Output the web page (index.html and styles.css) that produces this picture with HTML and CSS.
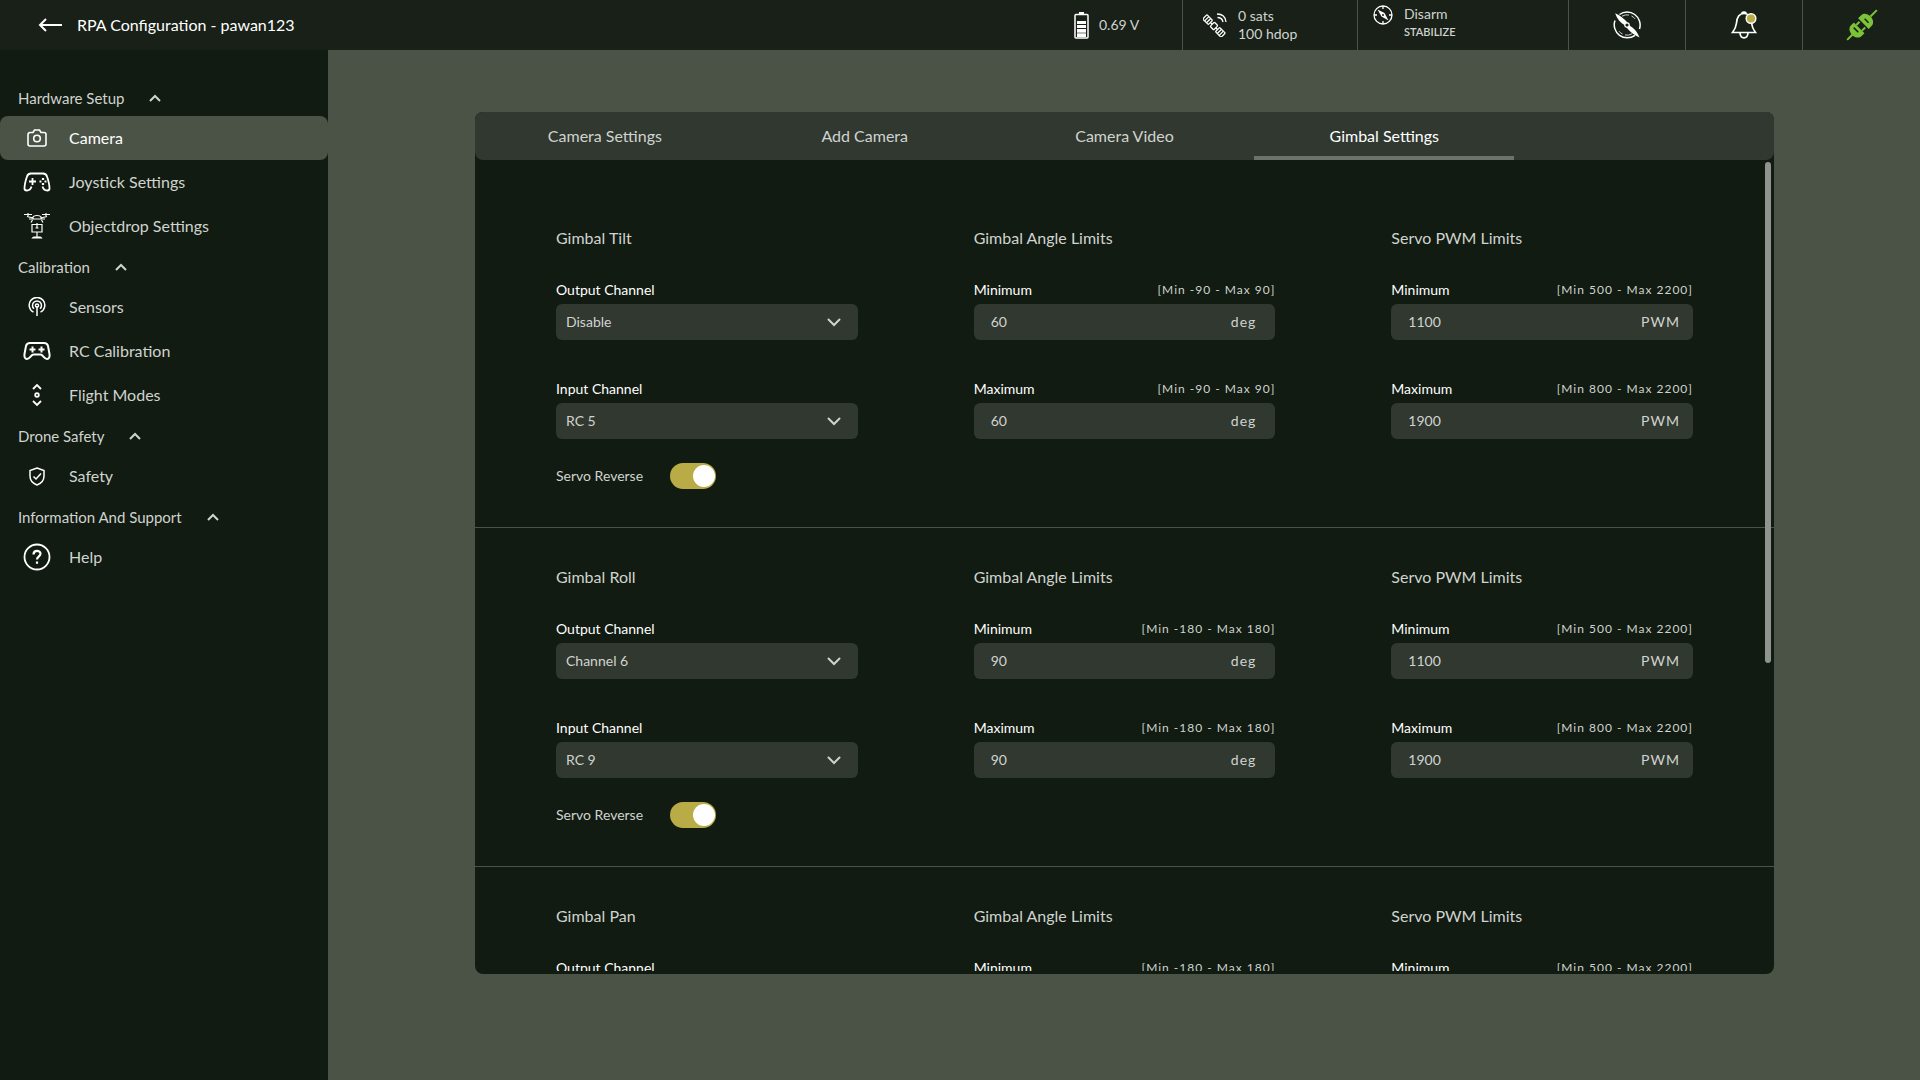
FILE: index.html
```html
<!DOCTYPE html>
<html lang="en">
  <head>
    <meta charset="UTF-8" />
    <meta name="viewport" content="width=device-width, initial-scale=1.0" />
    <title>RPA Configuration</title>
    <link rel="stylesheet" href="styles.css">
  </head>
  <body>
    <svg class="sprite" aria-hidden="true">
      <symbol id="up" viewBox="0 0 12 8"><path d="M1 7l5-5 5 5" fill="none" stroke="currentColor" stroke-width="2" /></symbol>
      <symbol id="down" viewBox="0 0 14 9"><path d="M1.500 1.500L7 7l5.500-5.500" fill="none" stroke="currentColor" stroke-width="2" stroke-linecap="round" /></symbol>
    </svg>

    <header class="topbar">
      <a class="back" href="#" aria-label="Back">
        <svg width="24" height="14" viewBox="0 0 24 14" fill="none" stroke="currentColor" stroke-width="2"><path d="M24 7H2M8 1L2 7l6 6" /></svg>
      </a>
      <h1 class="title">RPA Configuration - pawan123</h1>
      <div class="status battery">
        <svg width="15" height="27" viewBox="0 0 15 27">
          <path d="M5 0h5v2H5z" fill="#fff" />
          <rect x="1" y="2.500" width="13" height="23.500" rx="1" fill="none" stroke="#fff" stroke-width="1.500" />
          <path d="M3 9h9v3H3zM3 13h9v3H3zM3 17h9v3H3zM3 22h9v3H3z" fill="#fff" />
          <path d="M3 20h9v2H3z" fill="#bbb" />
        </svg>
        <span>0.69 V</span>
      </div>
      <div class="status gps">
        <svg width="24" height="24" viewBox="0 0 24 24" fill="none" stroke="#fff" stroke-width="1.300">
          <g transform="rotate(45 11 13)">
            <rect x="-2" y="10" width="8" height="6" rx="1" />
            <path d="M.7 10v6M3.300 10v6M6 13h2.500" />
            <rect x="8.500" y="10" width="5" height="6" rx="1" />
            <path d="M13.500 13h2.500" />
            <rect x="16" y="10" width="8" height="6" rx="1" />
            <path d="M18.700 10v6M21.300 10v6" />
          </g>
          <path d="M14 1c5 0 8.500 3 9 8M14.500 4.500c3 0 5 2 5.500 4.500" />
        </svg>
        <div class="lines"><span>0 sats</span><span>100 hdop</span></div>
      </div>
      <div class="status mode">
        <svg width="20" height="20" viewBox="0 0 20 20" fill="none" stroke="#fff" stroke-width="1.300">
          <circle cx="10" cy="10" r="9" />
          <path d="M10 1v3M10 16v3M1 10h3M16 10h3" />
          <path d="M4.500 4.500l7 3.500 4 7.500-7-4z" fill="#fff" stroke="none" />
          <circle cx="10" cy="10" r="1" fill="#182018" stroke="none" />
        </svg>
        <div class="lines"><span>Disarm</span><strong>STABILIZE</strong></div>
      </div>
      <button class="action" aria-label="Motors">
        <svg width="28" height="28" viewBox="0 0 28 28" fill="none" stroke="#fff">
          <path d="M6.500 3.500A13 13 0 0 1 26.500 18M22 24.300A13 13 0 0 1 2 9.500" stroke-width="1.500" />
          <path d="M9 5.200a10 10 0 0 1 7-1.200M18.500 5a10 10 0 0 1 3.500 2.800M19 22.800a10 10 0 0 1-7 1.200M9.500 23a10 10 0 0 1-3.500-2.800" stroke-width="0.800" />
          <path d="M2.200 2.200C7 4.500 11 7.500 14.500 11.500l2 3C20.500 17 24 20 26.500 26.500 21 24 17 21 13.500 16.500l-2-2.500C7.500 11.500 4 8 2.200 2.200z" fill="#fff" stroke="none" />
          <circle cx="14" cy="14" r="2.200" fill="#182018" stroke-width="1.200" />
        </svg>
      </button>
      <button class="action" aria-label="Notifications">
        <svg width="26" height="28" viewBox="0 0 26 28">
          <path d="M1.500 21.500h23c-2.500-3-3.500-5.500-4-9.500-.5-6.500-3-9.500-7.500-9.500S6 5.500 5.500 12c-.5 4-1.500 6.500-4 9.500zM9 22c.5 6.500 7.500 6.500 8 0M11 2.500c0-2 4-2 4 0" fill="none" stroke="#fff" stroke-width="1.700" />
          <circle cx="20" cy="7.500" r="4.800" fill="#b9ab45" stroke="#fff" stroke-width="1.500" />
        </svg>
      </button>
      <button class="action" aria-label="Connection">
        <svg width="32" height="32" viewBox="0 0 32 32">
          <g transform="rotate(-45 16 16)" fill="#7cc33a">
            <rect x="-5" y="15" width="8" height="2" />
            <path d="M2 16c0-5 3-7.500 6-7.500h4v15H8c-3 0-6-2.500-6-7.500z" />
            <path d="M12 11h4.500v2H12zM12 19h4.500v2H12z" />
            <path d="M18 8.500h4c3 0 6 2.500 6 7.500s-3 7.500-6 7.500h-4z" />
            <rect x="28" y="15" width="9" height="2" />
            <path d="M7.500 12H9v6.500H7.500zM21.500 13.500H23V19h-1.500z" fill="#182018" />
          </g>
        </svg>
      </button>
    </header>

    <div class="layout">
      <nav class="sidebar">
        <button class="group">Hardware Setup <svg class="up"><use href="#up" /></svg></button>
        <a class="item active" href="#">
          <svg width="20" height="18" viewBox="0 0 20 18" fill="none" stroke="currentColor" stroke-width="1.600"><path d="M3 3.500h3L7.500 1h5L14 3.500h3a2 2 0 0 1 2 2V15a2 2 0 0 1-2 2H3a2 2 0 0 1-2-2V5.500a2 2 0 0 1 2-2z" /><circle cx="10" cy="9.500" r="3.300" /></svg>
          <span>Camera</span>
        </a>
        <a class="item" href="#">
          <svg width="28" height="20" viewBox="0 0 28 20" fill="none" stroke="currentColor" stroke-width="1.800"><path d="M8 1.500c-2.500 0-3.500 1-4.200 3.500C2.500 9 1.500 13.500 1.500 16.500c0 1.700 1 2 2.300 2 2 0 3.700-.5 4.700-4M20 1.500c2.500 0 3.500 1 4.200 3.500 1.300 4 2.300 8.500 2.300 11.500 0 1.700-1 2-2.300 2-2 0-3.700-.5-4.700-4M7 1.500h14" /><path d="M9.500 6v7M6 9.500h7" /><path d="M20 6v2M20 11v2M16.500 9.500h2M21.500 9.500h2" stroke-width="2.200" /></svg>
          <span>Joystick Settings</span>
        </a>
        <a class="item" href="#">
          <svg width="26" height="26" viewBox="0 0 26 26" fill="none" stroke="currentColor" stroke-width="1.200"><path d="M0 1.500h8M18 1.500h8M4 0v3M22 0v3M3 3.500l6 1.500M23 3.500L17 5M9 4c1-2 7-2 8 0v2H9zM9 6H5M17 6h4M8.500 7L7 9.500M17.500 7L19 9.500M13 10v5M8 11.500h10V19H8zM11.500 15h3M13 19v5M8.500 25c1-1.500 8-1.500 9 0z" /></svg>
          <span>Objectdrop Settings</span>
        </a>

        <button class="group">Calibration <svg class="up"><use href="#up" /></svg></button>
        <a class="item" href="#">
          <svg width="18" height="20" viewBox="0 0 18 20" fill="none" stroke="currentColor" stroke-width="1.500"><path d="M5.500 15.200a7.800 7.800 0 1 1 7 0M6 11.800a4.500 4.500 0 1 1 6 0M9 9v10" /><circle cx="9" cy="8.500" r="1.600" /></svg>
          <span>Sensors</span>
        </a>
        <a class="item" href="#">
          <svg width="28" height="20" viewBox="0 0 28 20" fill="none" stroke="currentColor" stroke-width="2"><path d="M7 2h14c2.500 0 3.500 1 4 3l1.500 8c.5 3-.5 5-2.500 5-3 0-4-4.500-6.500-4.500h-7C8 13.500 7 18 4 18c-2 0-3-2-2.500-5L3 5c.5-2 1.500-3 4-3zM9.500 5.500v6M6.500 8.500h6M18.500 5.500v6M15.500 8.500h6" /></svg>
          <span>RC Calibration</span>
        </a>
        <a class="item" href="#">
          <svg width="12" height="24" viewBox="0 0 12 24" fill="none" stroke="currentColor" stroke-width="1.800"><path d="M2 6l4-4 4 4M2 18l4 4 4-4" /><circle cx="6" cy="12" r="1.800" /></svg>
          <span>Flight Modes</span>
        </a>

        <button class="group">Drone Safety <svg class="up"><use href="#up" /></svg></button>
        <a class="item" href="#">
          <svg width="16" height="19" viewBox="0 0 16 19" fill="none" stroke="currentColor" stroke-width="1.500"><path d="M8 1l7 2.500V9c0 5-3 7.500-7 9-4-1.500-7-4-7-9V3.500zM4.500 9.500L7 12l5-5.500" /></svg>
          <span>Safety</span>
        </a>

        <button class="group">Information And Support <svg class="up"><use href="#up" /></svg></button>
        <a class="item" href="#">
          <svg width="28" height="28" viewBox="0 0 28 28" fill="none" stroke="currentColor" stroke-width="1.800"><circle cx="14" cy="14" r="12.500" /><path d="M10.500 11.500c0-5 7-4.500 7-.7 0 2.500-3.500 2.600-3.500 5.700M14 18.500v2.300" stroke-width="2.200" /></svg>
          <span>Help</span>
        </a>
      </nav>

      <main class="main">
        <div class="panel">
          <div class="tabs" role="tablist">
            <button class="tab" role="tab">Camera Settings</button>
            <button class="tab" role="tab">Add Camera</button>
            <button class="tab" role="tab">Camera Video</button>
            <button class="tab selected" role="tab" aria-selected="true">Gimbal Settings</button>
          </div>
          <div class="content">
            <section class="gimbal">
              <h2>Gimbal Tilt</h2>
              <h2>Gimbal Angle Limits</h2>
              <h2>Servo PWM Limits</h2>
              <div class="field">
                <label for="tilt-out">Output Channel</label>
                <div class="box"><select id="tilt-out"><option>Disable</option></select><svg class="down"><use href="#down" /></svg></div>
              </div>
              <div class="field">
                <div class="caption"><label for="tilt-amin">Minimum</label><span class="hint">[Min -90 - Max 90]</span></div>
                <div class="box"><input id="tilt-amin" type="text" value="60"><span class="unit deg">deg</span></div>
              </div>
              <div class="field">
                <div class="caption"><label for="tilt-pmin">Minimum</label><span class="hint">[Min 500 - Max 2200]</span></div>
                <div class="box"><input id="tilt-pmin" type="text" value="1100"><span class="unit">PWM</span></div>
              </div>
              <div class="field">
                <label for="tilt-in">Input Channel</label>
                <div class="box"><select id="tilt-in"><option>RC 5</option></select><svg class="down"><use href="#down" /></svg></div>
              </div>
              <div class="field">
                <div class="caption"><label for="tilt-amax">Maximum</label><span class="hint">[Min -90 - Max 90]</span></div>
                <div class="box"><input id="tilt-amax" type="text" value="60"><span class="unit deg">deg</span></div>
              </div>
              <div class="field">
                <div class="caption"><label for="tilt-pmax">Maximum</label><span class="hint">[Min 800 - Max 2200]</span></div>
                <div class="box"><input id="tilt-pmax" type="text" value="1900"><span class="unit">PWM</span></div>
              </div>
              <div class="reverse">
                <label for="tilt-rev">Servo Reverse</label>
                <input class="switch" id="tilt-rev" type="checkbox" checked>
              </div>
            </section>

            <section class="gimbal">
              <h2>Gimbal Roll</h2>
              <h2>Gimbal Angle Limits</h2>
              <h2>Servo PWM Limits</h2>
              <div class="field">
                <label for="roll-out">Output Channel</label>
                <div class="box"><select id="roll-out"><option>Channel 6</option></select><svg class="down"><use href="#down" /></svg></div>
              </div>
              <div class="field">
                <div class="caption"><label for="roll-amin">Minimum</label><span class="hint">[Min -180 - Max 180]</span></div>
                <div class="box"><input id="roll-amin" type="text" value="90"><span class="unit deg">deg</span></div>
              </div>
              <div class="field">
                <div class="caption"><label for="roll-pmin">Minimum</label><span class="hint">[Min 500 - Max 2200]</span></div>
                <div class="box"><input id="roll-pmin" type="text" value="1100"><span class="unit">PWM</span></div>
              </div>
              <div class="field">
                <label for="roll-in">Input Channel</label>
                <div class="box"><select id="roll-in"><option>RC 9</option></select><svg class="down"><use href="#down" /></svg></div>
              </div>
              <div class="field">
                <div class="caption"><label for="roll-amax">Maximum</label><span class="hint">[Min -180 - Max 180]</span></div>
                <div class="box"><input id="roll-amax" type="text" value="90"><span class="unit deg">deg</span></div>
              </div>
              <div class="field">
                <div class="caption"><label for="roll-pmax">Maximum</label><span class="hint">[Min 800 - Max 2200]</span></div>
                <div class="box"><input id="roll-pmax" type="text" value="1900"><span class="unit">PWM</span></div>
              </div>
              <div class="reverse">
                <label for="roll-rev">Servo Reverse</label>
                <input class="switch" id="roll-rev" type="checkbox" checked>
              </div>
            </section>

            <section class="gimbal">
              <h2>Gimbal Pan</h2>
              <h2>Gimbal Angle Limits</h2>
              <h2>Servo PWM Limits</h2>
              <div class="field">
                <label for="pan-out">Output Channel</label>
                <div class="box"><select id="pan-out"></select><svg class="down"><use href="#down" /></svg></div>
              </div>
              <div class="field">
                <div class="caption"><label for="pan-amin">Minimum</label><span class="hint">[Min -180 - Max 180]</span></div>
                <div class="box"><input id="pan-amin" type="text"></div>
              </div>
              <div class="field">
                <div class="caption"><label for="pan-pmin">Minimum</label><span class="hint">[Min 500 - Max 2200]</span></div>
                <div class="box"><input id="pan-pmin" type="text"></div>
              </div>
            </section>
          </div>
          <div class="scroll-thumb"></div>
        </div>
      </main>
    </div>
  </body>
</html>
```
FILE: styles.css
```css
* {
  box-sizing: border-box;
}
body {
  margin: 0;
  height: 100vh;
  display: flex;
  flex-direction: column;
  background: #4b5347;
  color: #d0d3cf;
  font-family: Lato, sans-serif;
  font-size: 16px;
  line-height: 20px;
}
button,
input,
select {
  margin: 0;
  padding: 0;
  border: 0;
  background: none;
  color: inherit;
  font: inherit;
}
a {
  color: inherit;
  text-decoration: none;
}
svg {
  display: block;
  flex: none;
}
.sprite {
  position: absolute;
  width: 0;
  height: 0;
}

/* top bar */
.topbar {
  display: flex;
  align-items: center;
  height: 50px;
  flex: none;
  background: #182018;
}
.back {
  margin-left: 38px;
  color: #fff;
}
.title {
  flex: 1;
  margin: 0 0 0 15px;
  color: #fff;
  font-size: 16px;
  font-weight: 400;
}
.status {
  display: flex;
  align-items: center;
  height: 100%;
  font-size: 14px;
  line-height: 18px;
}
.battery {
  width: 108px;
  gap: 10px;
}
.gps {
  width: 175px;
  padding-left: 20px;
  gap: 11px;
  border-left: 1px solid #4b5347;
}
.mode {
  width: 211px;
  padding: 5px 0 0 15px;
  gap: 11px;
  align-items: flex-start;
  border-left: 1px solid #4b5347;
}
.mode strong {
  font-size: 11px;
  font-weight: 600;
}
.lines {
  display: flex;
  flex-direction: column;
}
.action {
  display: flex;
  align-items: center;
  justify-content: center;
  width: 117px;
  height: 100%;
  border-left: 1px solid #4b5347;
}
.action:last-child {
  width: 118px;
}

/* sidebar */
.layout {
  display: flex;
  flex: 1;
  min-height: 0;
}
.sidebar {
  width: 328px;
  flex: none;
  padding-top: 29px;
  background: #111b11;
}
.group {
  display: flex;
  align-items: center;
  gap: 25px;
  width: 100%;
  height: 37px;
  padding-left: 18px;
  font-size: 15px;
}
.up {
  width: 12px;
  height: 8px;
}
.item {
  display: grid;
  grid-template-columns: 34px 1fr;
  align-items: center;
  gap: 15px;
  height: 44px;
  padding-left: 20px;
}
.item svg {
  justify-self: center;
  color: #fff;
}
.item.active {
  border-radius: 8px;
  background: #4b5347;
  color: #fff;
}

/* settings panel */
.main {
  flex: 1;
  min-width: 0;
  padding: 62px 146px 106px 147px;
}
.panel {
  position: relative;
  display: flex;
  flex-direction: column;
  height: 100%;
  padding-bottom: 3px;
  border-radius: 8px;
  background: #111b11;
}
.tabs {
  display: grid;
  grid-template-columns: repeat(5, 1fr);
  height: 48px;
  flex: none;
  border-radius: 8px;
  background: #303830;
}
.tab {
  border-top: 4px solid transparent;
  border-bottom: 4px solid transparent;
}
.tab.selected {
  border-bottom-color: #6c736b;
  color: #fff;
}
.content {
  flex: 1;
  min-height: 0;
  padding-top: 29px;
  overflow-y: auto;
  scrollbar-width: none;
}
.scroll-thumb {
  position: absolute;
  top: 50px;
  right: 3px;
  width: 6px;
  height: 501px;
  border-radius: 3px;
  background: #8f948f;
}
.gimbal {
  display: grid;
  grid-template-columns: repeat(3, 1fr);
  column-gap: 116px;
  padding: 39px 81px 38px;
  border-bottom: 1px solid #4b5347;
}
.gimbal h2 {
  margin: 0 0 32px;
  font-size: 16px;
  font-weight: 400;
}
.field {
  display: flex;
  flex-direction: column;
  gap: 4px;
  margin-bottom: 39px;
  font-size: 14px;
}
.field label {
  color: #fff;
}
.caption {
  display: flex;
  justify-content: space-between;
}
.hint {
  font-size: 12px;
  letter-spacing: 1px;
}
.box {
  display: flex;
  align-items: center;
  height: 36px;
  border-radius: 6px;
  background: #303830;
}
.box select {
  flex: 1;
  height: 100%;
  padding-left: 10px;
  appearance: none;
}
.box input {
  flex: 1;
  min-width: 0;
  height: 100%;
  padding: 0 0 1px 17px;
}
.down {
  width: 14px;
  height: 9px;
  margin-right: 17px;
}
.unit {
  margin-right: 13px;
  letter-spacing: 1px;
}
.unit.deg {
  margin-right: 19px;
}
.reverse {
  display: flex;
  align-items: center;
  gap: 27px;
  margin-top: -15px;
  font-size: 14px;
}
.switch {
  display: flex;
  align-items: center;
  justify-content: flex-end;
  width: 46px;
  height: 26px;
  padding: 0 1px;
  border-radius: 13px;
  background: #6c736b;
  appearance: none;
}
.switch::before {
  content: "";
  width: 22px;
  height: 22px;
  border-radius: 50%;
  background: #fff;
}
.switch:checked {
  background: #b9ab45;
}
```
